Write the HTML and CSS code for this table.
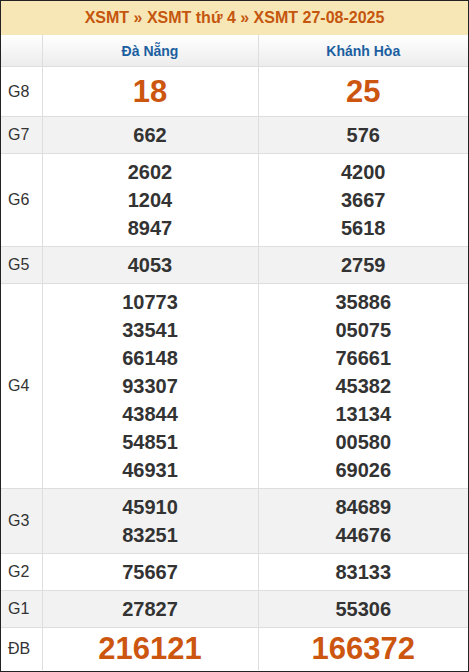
FILE: index.html
```html
<!DOCTYPE html>
<html lang="vi">
<head>
<meta charset="utf-8">
<link rel="stylesheet" href="styles.css">
</head>
<body>
<div class="box">
  <div class="title"><span>XSMT</span> » <span>XSMT thứ 4</span> » <span>XSMT 27-08-2025</span></div>
  <table class="kq">
    <colgroup><col class="c-lbl"><col class="c-a"><col class="c-b"></colgroup>
    <thead>
      <tr class="head"><th></th><th>Đà Nẵng</th><th>Khánh Hòa</th></tr>
    </thead>
    <tbody>
      <tr class="big"><td class="lbl">G8</td><td>18</td><td>25</td></tr>
      <tr class="alt"><td class="lbl">G7</td><td>662</td><td>576</td></tr>
      <tr><td class="lbl">G6</td><td>2602<br>1204<br>8947</td><td>4200<br>3667<br>5618</td></tr>
      <tr class="alt"><td class="lbl">G5</td><td>4053</td><td>2759</td></tr>
      <tr><td class="lbl">G4</td><td>10773<br>33541<br>66148<br>93307<br>43844<br>54851<br>46931</td><td>35886<br>05075<br>76661<br>45382<br>13134<br>00580<br>69026</td></tr>
      <tr class="alt"><td class="lbl">G3</td><td>45910<br>83251</td><td>84689<br>44676</td></tr>
      <tr><td class="lbl">G2</td><td>75667</td><td>83133</td></tr>
      <tr class="alt"><td class="lbl">G1</td><td>27827</td><td>55306</td></tr>
      <tr class="big db"><td class="lbl">ĐB</td><td>216121</td><td>166372</td></tr>
    </tbody>
  </table>
</div>
</body>
</html>
```
FILE: styles.css
```css
html, body {
  margin: 0;
  padding: 0;
  background: #fff;
}
.box {
  width: 469px;
  height: 672px;
  box-sizing: border-box;
  border: 1px solid #222;
  font-family: "Liberation Sans", Arial, sans-serif;
  color: #333;
  overflow: hidden;
}
.title {
  height: 34px;
  line-height: 34px;
  background: #f8e7b6;
  text-align: center;
  font-weight: bold;
  font-size: 16px;
  color: #c4560e;
}
.kq {
  width: 467px;
  border-collapse: collapse;
  table-layout: fixed;
}
.c-lbl { width: 41px; }
.c-a { width: 216px; }
.c-b { width: 210px; }
.kq th, .kq td {
  border: 1px solid #dedede;
  text-align: center;
  padding: 4px 0;
}
.kq tr > :first-child { border-left: none; }
.kq tr > :last-child { border-right: none; }
.kq thead th {
  border-top: none;
  height: 23px;
  padding: 4px 0 4px;
  font-size: 14px;
  font-weight: bold;
  color: #1b5fa0;
  background: linear-gradient(#ffffff, #ececec);
}
.kq td {
  font-size: 20px;
  font-weight: bold;
  line-height: 28px;
  color: #333;
}
.kq td.lbl {
  font-size: 16px;
  font-weight: normal;
  text-align: left;
  padding-left: 7px;
  color: #333;
}
.kq tr.alt td { background: #f2f2f2; }
.kq tr.big td {
  font-size: 31px;
  line-height: 41px;
  color: #cc5510;
}
.kq tr.big td.lbl {
  font-size: 16px;
  color: #333;
}
.kq tr.db td { line-height: 34px; border-bottom: none; }
```
